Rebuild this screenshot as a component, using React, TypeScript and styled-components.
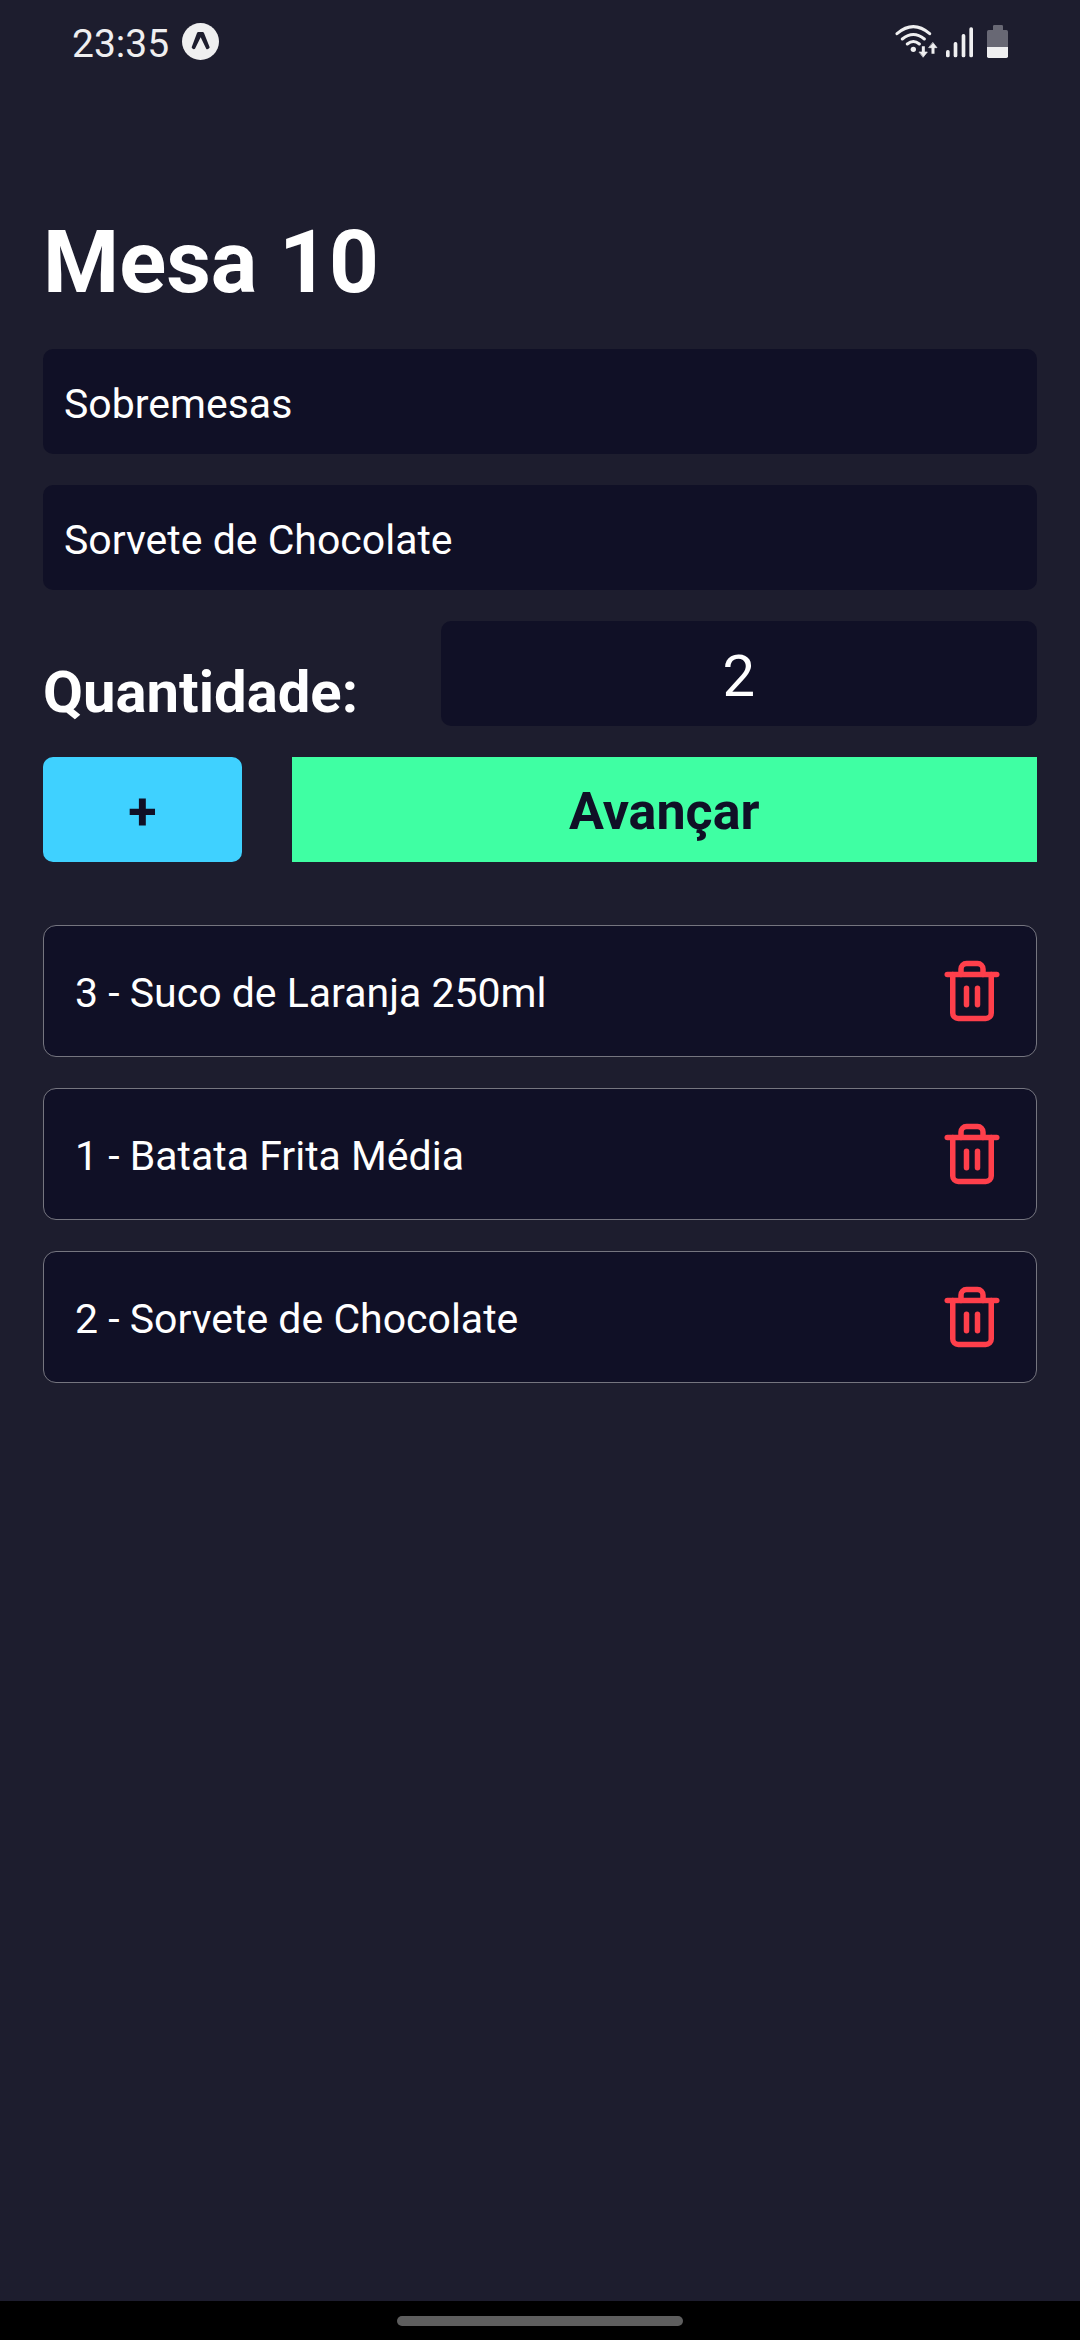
import React, { useState } from 'react';
import styled, { createGlobalStyle, ThemeProvider } from 'styled-components';
import { FiTrash2 } from 'react-icons/fi';

const theme = {
  background: '#1d1d2e',
  surface: '#101026',
  text: '#ffffff',
  status: '#efeff0',
  green: '#3fffa3',
  blue: '#3fd1ff',
  red: '#ff3f4b',
  border: '#75757f',
};

const GlobalStyle = createGlobalStyle`
  *, *::before, *::after { box-sizing: border-box; }
  body {
    margin: 0;
    background: ${theme.background};
    color: ${theme.text};
    font-family: Roboto, "Noto Sans", sans-serif;
  }
  button, input, select { font-family: inherit; margin: 0; }
`;

const Screen = styled.div`
  min-height: 100vh;
  display: flex;
  flex-direction: column;
  background: ${({ theme }) => theme.background};
`;

const StatusBar = styled.header`
  display: flex;
  align-items: center;
  justify-content: space-between;
  height: 82px;
  padding: 0 72px;
  color: ${({ theme }) => theme.status};
`;

const StatusGroup = styled.div<{ $gap: number }>`
  display: flex;
  align-items: center;
  gap: ${({ $gap }) => $gap}px;
`;

const Clock = styled.time`
  padding-top: 6px;
  font-size: 39px;
  line-height: 46px;
`;

const Content = styled.main`
  flex: 1;
  padding: 129px 43px 43px;
`;

const Title = styled.h1`
  margin: 0 0 36px;
  font-size: 87px;
  line-height: 102px;
  font-weight: 700;
`;

const OrderForm = styled.form`
  display: flex;
  flex-direction: column;
  gap: 31px;
`;

const Picker = styled.select`
  appearance: none;
  width: 100%;
  height: 105px;
  padding: 4px 21px 0;
  border: 0;
  border-radius: 10px;
  background: ${({ theme }) => theme.surface};
  color: ${({ theme }) => theme.text};
  font-size: 41px;
`;

const Row = styled.div<{ $align?: string }>`
  display: flex;
  justify-content: space-between;
  align-items: ${({ $align }) => $align ?? 'stretch'};
`;

const QuantityLabel = styled.label`
  font-size: 58px;
  line-height: 68px;
  font-weight: 700;
`;

const QuantityInput = styled.input`
  width: 60%;
  height: 105px;
  padding: 4px 21px 0;
  border: 0;
  border-radius: 10px;
  background: ${({ theme }) => theme.surface};
  color: ${({ theme }) => theme.text};
  font-size: 58px;
  text-align: center;
`;

const ActionButton = styled.button<{ $tone: 'blue' | 'green'; $width: number; $radius: number }>`
  width: ${({ $width }) => $width}%;
  height: 105px;
  padding: 4px 0 0;
  border: 0;
  border-radius: ${({ $radius }) => $radius}px;
  background: ${({ theme, $tone }) => theme[$tone]};
  color: ${({ theme }) => theme.surface};
  font-size: 52px;
  font-weight: 700;
`;

const ItemList = styled.ul`
  display: flex;
  flex-direction: column;
  gap: 31px;
  margin: 63px 0 0;
  padding: 0;
  list-style: none;
`;

const Item = styled.li`
  display: flex;
  align-items: center;
  justify-content: space-between;
  height: 132px;
  padding: 0 31px;
  border: 1px solid ${({ theme }) => theme.border};
  border-radius: 13px;
  background: ${({ theme }) => theme.surface};
`;

const ItemText = styled.span`
  padding-top: 4px;
  font-size: 41px;
  line-height: 50px;
`;

const DeleteButton = styled.button`
  display: flex;
  padding: 0;
  border: 0;
  background: none;
  color: ${({ theme }) => theme.red};
`;

const NavigationBar = styled.footer`
  display: flex;
  align-items: center;
  justify-content: center;
  height: 39px;
  background: #000000;
`;

const Handle = styled.div`
  width: 286px;
  height: 10px;
  border-radius: 5px;
  background: #5e5e5e;
`;

const ExpoIcon = () => (
  <svg width="37" height="37" viewBox="0 0 111 111" aria-hidden="true">
    <circle cx="55.5" cy="55.5" r="55.5" fill={theme.status} />
    <path
      d="M49 27h13c2 0 3 1 4 3l17 43c-1 4-6 7-10 5L56 43 39 77c-3 3-9 1-10-4l16-43c1-2 2-3 4-3z"
      fill={theme.background}
    />
  </svg>
);

const WifiIcon = () => (
  <svg width="43" height="34" viewBox="45 42 129 102" fill="none" stroke="currentColor" strokeLinecap="round" aria-hidden="true">
    <path d="M51 71Q100 29 149 71M67 87Q100 60 133 87M82 102Q100 87 118 102" strokeWidth="9" />
    <circle cx="100" cy="118" r="8" fill="currentColor" stroke="none" />
    <path d="M130 109v22M159 131v-22" strokeWidth="9" strokeLinecap="butt" />
    <path d="M118 126h24l-12 15zM147 113h24l-12-15z" fill="currentColor" strokeWidth="2" strokeLinejoin="round" />
  </svg>
);

const SignalIcon = () => (
  <svg width="35" height="34" viewBox="195 42 105 102" fill="currentColor" aria-hidden="true">
    <rect x="198" y="120" width="11" height="22" rx="5" />
    <rect x="221" y="96" width="11" height="46" rx="5" />
    <rect x="245" y="72" width="11" height="70" rx="5" />
    <rect x="268" y="52" width="11" height="90" rx="5" />
  </svg>
);

const BatteryIcon = () => (
  <svg width="21" height="34" viewBox="321 42 63 102" aria-hidden="true">
    <path d="M339 60V49q0-4 4-4h22q4 0 4 4v11h10q5 0 5 5v46h-63V65q0-5 5-5z" fill="#686874" />
    <path d="M321 111h63v28q0 5-5 5h-53q-5 0-5-5z" fill="currentColor" />
  </svg>
);

const categories = ['Sobremesas', 'Bebidas', 'Porções'];
const products = ['Sorvete de Chocolate', 'Suco de Laranja 250ml', 'Batata Frita Média'];

const initialItems = [
  { id: 1, amount: '3', name: 'Suco de Laranja 250ml' },
  { id: 2, amount: '1', name: 'Batata Frita Média' },
  { id: 3, amount: '2', name: 'Sorvete de Chocolate' },
];

export default function App() {
  const [category, setCategory] = useState(categories[0]);
  const [product, setProduct] = useState(products[0]);
  const [amount, setAmount] = useState('2');
  const [items, setItems] = useState(initialItems);

  const addItem = () => setItems((list) => [...list, { id: Date.now(), amount, name: product }]);
  const removeItem = (id: number) => setItems((list) => list.filter((item) => item.id !== id));

  return (
    <ThemeProvider theme={theme}>
      <GlobalStyle />
      <Screen>
        <StatusBar>
          <StatusGroup $gap={13}>
            <Clock>23:35</Clock>
            <ExpoIcon />
          </StatusGroup>
          <StatusGroup $gap={7}>
            <WifiIcon />
            <SignalIcon />
            <BatteryIcon />
          </StatusGroup>
        </StatusBar>

        <Content>
          <Title>Mesa 10</Title>
          <OrderForm onSubmit={(event) => event.preventDefault()}>
            <Picker aria-label="Categoria" value={category} onChange={(e) => setCategory(e.target.value)}>
              {categories.map((name) => (
                <option key={name}>{name}</option>
              ))}
            </Picker>
            <Picker aria-label="Produto" value={product} onChange={(e) => setProduct(e.target.value)}>
              {products.map((name) => (
                <option key={name}>{name}</option>
              ))}
            </Picker>
            <Row $align="flex-end">
              <QuantityLabel htmlFor="amount">Quantidade:</QuantityLabel>
              <QuantityInput
                id="amount"
                inputMode="numeric"
                value={amount}
                onChange={(e) => setAmount(e.target.value)}
              />
            </Row>
            <Row>
              <ActionButton type="button" $tone="blue" $width={20} $radius={10} onClick={addItem}>
                +
              </ActionButton>
              <ActionButton type="submit" $tone="green" $width={75} $radius={0}>
                Avançar
              </ActionButton>
            </Row>
          </OrderForm>

          <ItemList>
            {items.map((item) => (
              <Item key={item.id}>
                <ItemText>
                  {item.amount} - {item.name}
                </ItemText>
                <DeleteButton type="button" aria-label={`Remover ${item.name}`} onClick={() => removeItem(item.id)}>
                  <FiTrash2 size={66} />
                </DeleteButton>
              </Item>
            ))}
          </ItemList>
        </Content>

        <NavigationBar>
          <Handle />
        </NavigationBar>
      </Screen>
    </ThemeProvider>
  );
}
